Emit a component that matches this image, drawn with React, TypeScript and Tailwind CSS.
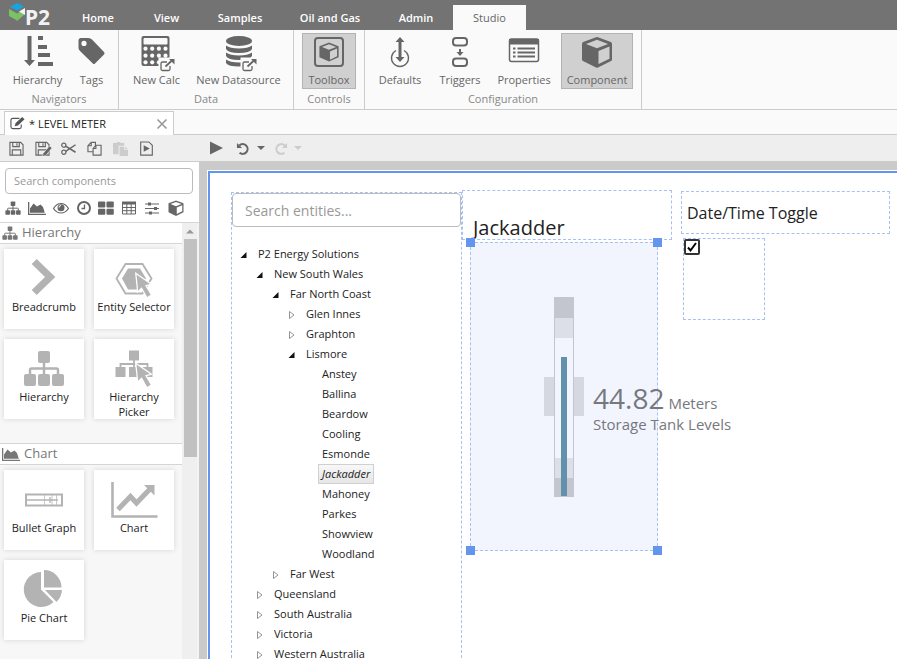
import type { ReactNode } from "react";

type IconProps = { className?: string };

/* ---------- shared drawings ---------- */

function Cube({ className = "size-9" }: IconProps) {
  return (
    <svg viewBox="0 0 36 36" className={className} fill="currentColor">
      <path
        fillRule="evenodd"
        d="M17 3.3q1-.5 2 0l12.800 4.800q1.200.500 1.200 1.800v15.500q0 1.200-1 1.700l-13 6.300q-1 .5-2 0l-13-6.300q-1-.5-1-1.700V9.900q0-1.300 1.200-1.800zM18 5.800 7 10l11 4.300L29 10zM19.500 17v13l11-5.300V12.600z"
      />
    </svg>
  );
}

function Sitemap({ className = "size-4" }: IconProps) {
  return (
    <svg viewBox="0 0 42 42" className={className} fill="currentColor">
      <rect x="15" y="4" width="12" height="12" rx="2" />
      <rect x="1" y="27" width="12" height="12" rx="2" />
      <rect x="15" y="27" width="12" height="12" rx="2" />
      <rect x="29" y="27" width="12" height="12" rx="2" />
      <path d="M7 28v-5q0-1.500 1.500-1.500h25q1.500 0 1.500 1.500v5M21 15v13" fill="none" stroke="currentColor" strokeWidth="2.500" />
    </svg>
  );
}

function AreaChart({ className = "h-4 w-[18px]" }: IconProps) {
  return (
    <svg viewBox="0 0 18 16" className={className} fill="currentColor">
      <path d="M0 2h1.300v11.700H18V15H0z" />
      <path d="M2 12.700V8.500L5.500 3.500l3.500 3L12.500 4.500l2.500 2.500 1.800 5.700z" />
    </svg>
  );
}

function ExternalLink() {
  return (
    <g>
      <path d="M19.500 23.500H37V39H19.500z" className="fill-[#fafafa]" />
      <path d="M28 28h-4.500q-1.500 0-1.500 1.500v5.500q0 1.500 1.500 1.500h6q1.500 0 1.500-1.500v-3" fill="none" stroke="currentColor" strokeWidth="1.300" />
      <path d="M26.500 32.500l7-6.500" fill="none" stroke="currentColor" strokeWidth="1.800" />
      <path d="M30 25h5.500v5.500z" />
    </g>
  );
}

function Pointer() {
  return (
    <path
      d="M23.500 17.500l13.500 9.500-5 1.200 5.700 9.500-3.500 2.200-5.500-9.700-3.500 3.500z"
      stroke="white"
      strokeWidth="2.500"
      paintOrder="stroke"
    />
  );
}

function Svg({ box = 36, className = "size-9", children }: { box?: number; className?: string; children: ReactNode }) {
  return (
    <svg viewBox={`0 0 ${box} ${box}`} className={`${className} shrink-0 overflow-visible`} fill="currentColor">
      {children}
    </svg>
  );
}

/* ---------- ribbon ---------- */

const ribbon = [
  {
    name: "Navigators",
    items: [
      {
        label: "Hierarchy",
        width: "w-[59px]",
        icon: (
          <Svg>
            <path d="M7.500 2h4v24H15l-5.500 6L4 26h3.500zM18 2h5v4h-5zM18 11h9v4h-9zM18 19h12v4H18zM18 28h15v4H18z" />
          </Svg>
        ),
      },
      {
        label: "Tags",
        width: "w-[37px]",
        icon: (
          <Svg>
            <path
              fillRule="evenodd"
              d="M4.500 6.500Q4.500 4 7 4h7.500q2 0 3.500 1.500L30 18q1.200 1.200 0 2.400L21 29.600q-1 1-2.200 0L6 17q-1.500-1.500-1.500-3zM10 6.800a2.600 2.600 0 1 0 0 5.200 2.600 2.600 0 0 0 0-5.200z"
            />
          </Svg>
        ),
      },
    ],
  },
  {
    name: "Data",
    items: [
      {
        label: "New Calc",
        width: "w-[59px]",
        icon: (
          <Svg>
            <rect x="2.500" y="2" width="28" height="30" rx="2" />
            <rect x="4.500" y="4" width="24" height="6.500" rx="1" className="fill-[#fafafa]" />
            <g className="fill-[#fafafa]">
              {[14.7, 21.7, 28.3].map((y) =>
                [6.5, 13.2, 19.9, 26.5].map((x) => <circle key={`${x}-${y}`} cx={x} cy={y} r="2.100" />)
              )}
            </g>
            <ExternalLink />
          </Svg>
        ),
      },
      {
        label: "New Datasource",
        width: "w-[93px]",
        icon: (
          <Svg>
            <ellipse cx="18" cy="7" rx="13" ry="5" />
            <path d="M5 11.500q4 3 13 3t13-3v3.500q-2 4-13 4t-13-4zM5 18.500q4 3 13 3t13-3V22q-2 4-13 4T5 22zM5 25.500q4 3 13 3t13-3V29q-2 3.500-13 3.500T5 29z" />
            <ExternalLink />
          </Svg>
        ),
      },
    ],
  },
  {
    name: "Controls",
    items: [
      {
        label: "Toolbox",
        width: "w-[54px]",
        active: true,
        icon: (
          <Svg>
            <rect x="4" y="4" width="28" height="28" rx="3" fill="none" stroke="currentColor" strokeWidth="2" />
            <g transform="translate(6.500 6.500) scale(.64)">
              <path
                fillRule="evenodd"
                d="M18 3l15 6v17l-15 7-15-7V9zM18 5.800 7 10l11 4.300L29 10zM19.500 17v13l11-5.300V12.600z"
              />
            </g>
          </Svg>
        ),
      },
    ],
  },
  {
    name: "Configuration",
    items: [
      {
        label: "Defaults",
        width: "w-[54px]",
        icon: (
          <Svg>
            <path d="M18 3l4.500 5h-3v15h3L18 28l-4.500-5h3V8h-3z" />
            <path d="M14 16.500a8.500 8.500 0 1 0 8 0" fill="none" stroke="currentColor" strokeWidth="1.400" />
          </Svg>
        ),
      },
      {
        label: "Triggers",
        width: "w-[54px]",
        icon: (
          <Svg>
            <rect x="11" y="4" width="14" height="7.500" rx="3" fill="none" stroke="currentColor" strokeWidth="2" />
            <rect x="11" y="24.500" width="14" height="7.500" rx="3" fill="none" stroke="currentColor" strokeWidth="2" />
            <path d="M17 15h2v3h2.500L18 22l-3.500-4H17z" />
          </Svg>
        ),
      },
      {
        label: "Properties",
        width: "w-[62px]",
        icon: (
          <Svg>
            <rect x="3.500" y="5" width="29" height="22.500" rx="2" fill="none" stroke="currentColor" strokeWidth="1.500" />
            <path d="M3 5h30v5.500H3zM7 13.500h2.500v2H7zM7 17.500h2.500v2H7zM7 21.500h2.500v2H7zM11.500 13.500H29v2H11.500zM11.500 17.500H29v2H11.500zM11.500 21.500H29v2H11.500z" />
          </Svg>
        ),
      },
      { label: "Component", width: "w-[72px]", active: true, icon: <Cube className="size-9 shrink-0" /> },
    ],
  },
];

const menu = [
  { label: "Home", width: "w-[72px]" },
  { label: "View", width: "w-[65px]" },
  { label: "Samples", width: "w-[82px]" },
  { label: "Oil and Gas", width: "w-[98px]" },
  { label: "Admin", width: "w-[74px]" },
];

function Header() {
  return (
    <header className="flex h-[30px] shrink-0 items-end bg-[#737373] text-[11px] font-semibold text-white">
      <div className="w-[62px] self-stretch">
        <svg viewBox="0 0 62 30" className="h-full w-full" role="img" aria-label="P2">
          <path d="M17 3l7 3.500-6.500 4L10 7z" fill="#14a5e3" />
          <path d="M9 9l8 4.500 1 7.500-9-5z" fill="#7bc265" />
          <path d="M17 13.500l7-4v5.500l-6.500 5.500z" fill="#7bc265" />
          <path d="M25 8v7l-6-3.500z" fill="#f2f2f2" />
          <text x="25" y="25" fontSize="21" fontWeight="700" fill="#f2f2f2" fontFamily="'Noto Sans', sans-serif">
            P2
          </text>
        </svg>
      </div>
      <nav className="flex">
        {menu.map((m) => (
          <a key={m.label} href="#" className={`${m.width} text-center leading-[25px]`}>
            {m.label}
          </a>
        ))}
        <a href="#" className="w-[73px] bg-[#fafafa] text-center leading-[25px] font-normal text-[#666]">
          Studio
        </a>
      </nav>
    </header>
  );
}

function Ribbon() {
  return (
    <div className="flex shrink-0 border-b border-[#ccc] bg-[#fafafa]">
      {ribbon.map((group) => (
        <section key={group.name} className="border-r border-[#ccc] px-2 pt-[3px]">
          <div className="flex gap-1.5">
            {group.items.map((item) => (
              <button
                key={item.label}
                className={`${item.width} flex h-14 flex-col items-center border text-[11px] leading-5 whitespace-nowrap text-[#666] ${
                  item.active ? "border-[#b3b3b3] bg-[#d0d0d0]" : "border-transparent"
                }`}
              >
                {item.icon}
                {item.label}
              </button>
            ))}
          </div>
          <h2 className="text-center text-[11px] leading-5 text-[#888]">{group.name}</h2>
        </section>
      ))}
    </div>
  );
}

/* ---------- document tab and toolbar ---------- */

const SAVE = "M1 1.500h11.500L15 4v11H1zM4 1.500v4.500h7V1.500M8.500 2.500v2.500M3.500 15V9.500h9V15";

function DocumentTabs() {
  return (
    <div className="flex h-[25px] shrink-0 border-b border-[#ccc] bg-[#fafafa] pt-px pl-1">
      <div className="-mb-px flex w-[170px] items-center border border-b-0 border-[#ccc] bg-white px-[5px] text-[11px] text-[#222]">
        <Svg box={16} className="size-[15px] text-[#555]">
          <path d="M10 2.500H3Q1 2.500 1 4.500v7q0 2 2 2h7q2 0 2-2V9" fill="none" stroke="currentColor" strokeWidth="1.200" />
          <path d="M13 1l2.500 2.500L8.500 10 5 11l1-3.500z" />
        </Svg>
        <span className="ml-1 flex-1 leading-6">* LEVEL METER</span>
        <button aria-label="Close tab" className="text-[#999]">
          <svg viewBox="0 0 12 12" className="size-3" stroke="currentColor" strokeWidth="1.600">
            <path d="M1.500 1.500l9 9M10.500 1.500l-9 9" />
          </svg>
        </button>
      </div>
    </div>
  );
}

function Line({ d, width = 1.2 }: { d: string; width?: number }) {
  return <path d={d} fill="none" stroke="currentColor" strokeWidth={width} />;
}

function Caret() {
  return (
    <svg viewBox="0 0 8 4" className="h-1 w-2" fill="currentColor">
      <path d="M0 0h8L4 4z" />
    </svg>
  );
}

const tools = [
  { label: "Save", icon: <Line d={SAVE} /> },
  {
    label: "Save as",
    icon: (
      <>
        <Line d={SAVE} />
        <path d="M15.500 5.500l2.300 2-6.300 7.500-3 1 .6-3z" stroke="#eee" strokeWidth="1" paintOrder="stroke" />
      </>
    ),
  },
  {
    label: "Cut",
    icon: (
      <>
        <circle cx="3" cy="4.500" r="2.200" fill="none" stroke="currentColor" strokeWidth="1.300" />
        <circle cx="3" cy="12" r="2.200" fill="none" stroke="currentColor" strokeWidth="1.300" />
        <Line d="M5 5.500l10.500 6.500M5 11l10.500-7" width={1.6} />
      </>
    ),
  },
  {
    label: "Copy",
    icon: <Line d="M6 11.500H1V5l3.500-3.500H9V5M1 5h3.500V1.500M9.500 4.500H15v10.500H6.500V8zM6.500 8h3V4.500" />,
  },
  {
    label: "Paste",
    disabled: true,
    icon: (
      <>
        <path d="M0 2h4V1h4v1h4v3H6v9H0z" />
        <path d="M7 6h5v3.500h4V16H7zM13 6l3 2.800h-3z" />
      </>
    ),
  },
  {
    label: "Preview",
    icon: (
      <>
        <Line d="M1.800 1h8.700L14.200 4.500V15H1.800z" />
        <path d="M5 4.500L11.500 8 5 11.500z" />
      </>
    ),
  },
];

const UNDO = "M3.500 4.800a5.200 5.200 0 1 1 .3 7.700";

function Toolbar() {
  return (
    <div className="flex h-[27px] shrink-0 items-center border-b border-[#ccc] bg-[#eee] text-[#666]">
      <div className="flex w-[199px] shrink-0 gap-2.5 pl-[9px]">
        {tools.map((t) => (
          <button key={t.label} aria-label={t.label} disabled={t.disabled} className="w-4 disabled:text-[#ccc]">
            <Svg box={16} className="size-[15px]">
              {t.icon}
            </Svg>
          </button>
        ))}
      </div>
      <button aria-label="Run" className="ml-2.5">
        <Svg box={16} className="size-4">
          <path d="M1 1.500L14 8 1 14.500z" />
        </Svg>
      </button>
      <button aria-label="Undo" className="ml-[11px] flex items-center gap-1.5">
        <Svg box={16} className="size-[15px]">
          <Line d={UNDO} width={2.2} />
          <path d="M1 2v5.500h5.500z" />
        </Svg>
        <Caret />
      </button>
      <button aria-label="Redo" disabled className="ml-2 flex items-center gap-1.5 text-[#ccc]">
        <Svg box={16} className="size-[15px] -scale-x-100">
          <Line d={UNDO} width={2.2} />
          <path d="M1 2v5.500h5.500z" />
        </Svg>
        <Caret />
      </button>
    </div>
  );
}

/* ---------- component toolbox ---------- */

const categories = [
  { label: "Hierarchy", icon: <Sitemap /> },
  { label: "Chart", icon: <AreaChart /> },
  {
    label: "Display",
    icon: (
      <Svg box={16} className="size-4">
        <Line d="M.5 8.500Q3.500 3.500 8 3.500t7.500 5Q12.500 13 8 13T.5 8.500z" />
        <circle cx="8" cy="7.700" r="3.500" />
        <path d="M6 7.500Q6 5.500 8 5.500" fill="none" stroke="white" />
      </Svg>
    ),
  },
  {
    label: "Time",
    icon: (
      <Svg box={16} className="size-4">
        <circle cx="8" cy="8" r="6" fill="none" stroke="currentColor" strokeWidth="2" />
        <Line d="M8.500 4.500v4H5.500" width={1.3} />
      </Svg>
    ),
  },
  {
    label: "Layout",
    icon: (
      <Svg box={16} className="size-4">
        <rect x="0" y="1.500" width="7.300" height="6" rx="1" />
        <rect x="8.500" y="1.500" width="7.300" height="6" rx="1" />
        <rect x="0" y="8.700" width="7.300" height="6" rx="1" />
        <rect x="8.500" y="8.700" width="7.300" height="6" rx="1" />
      </Svg>
    ),
  },
  {
    label: "Table",
    icon: (
      <Svg box={16} className="size-4">
        <path d="M1 1.500h14v3H1z" />
        <Line d="M1.500 2v12h13V2M1 7.500h14M1 10.700h14M5.800 4v10M10.200 4v10" width={1} />
      </Svg>
    ),
  },
  {
    label: "Inputs",
    icon: (
      <Svg box={16} className="size-4">
        <Line d="M1 4h14M1 8.500h14M1 13h14" width={1.2} />
        <path d="M4 2.500h3v3H4zM10 7h3v3h-3zM5 11.500h3v3H5z" />
      </Svg>
    ),
  },
  { label: "Objects", icon: <Cube className="size-[18px]" /> },
];

const library = [
  {
    name: "Hierarchy",
    icon: <Sitemap />,
    items: [
      {
        label: "Breadcrumb",
        icon: <path d="M13.700 2l18.600 18-18.600 18-5-5L22 20 8.700 7z" />,
      },
      {
        label: "Entity Selector",
        icon: (
          <>
            <Line d="M3.500 21.500L12.500 7h17l9 14.500-9 15h-17z" width={1.8} />
            <path d="M9 21.500L15 11.500h12l6 10-6 11H15z" />
            <Pointer />
          </>
        ),
      },
      {
        label: "Hierarchy",
        icon: <Sitemap className="size-[42px]" />,
      },
      {
        label: "Hierarchy Picker",
        icon: (
          <>
            <path d="M16 3.500h10v10H16zM2.500 20h10v10h-10zM16 20h10v10H16zM29.500 20h10v10h-10z" />
            <Line d="M7.500 20v-3h27v3M21 13v7" width={1.8} />
            <Pointer />
          </>
        ),
      },
    ],
  },
  {
    name: "Chart",
    icon: <AreaChart />,
    items: [
      {
        label: "Bullet Graph",
        icon: (
          <>
            <Line d="M3 16.500h36v11H3z" width={2} />
            <Line d="M4 22h31" width={1.5} />
            <Line d="M21.500 17v10M29 17v10M33.500 17v10" width={0.7} />
            <Line d="M27 19v6" width={1.3} />
          </>
        ),
      },
      {
        label: "Chart",
        icon: (
          <>
            <Line d="M-.5 4v34.500h45" width={2.6} />
            <Line d="M5 31.500l12.500-13 6 6.500L37 11" width={5} />
            <path d="M31 7h10.500v10.500z" />
          </>
        ),
      },
      {
        label: "Pie Chart",
        icon: (
          <>
            <path d="M18 4v17.500l12.500 12.500A17.500 17.500 0 1 1 18 4z" />
            <path d="M21 2a17.500 17.500 0 0 1 17.500 17.500H21z" />
            <path d="M22 22h17q-.5 7-5.500 12z" />
          </>
        ),
      },
    ],
  },
];

function Toolbox() {
  return (
    <aside className="flex w-[199px] shrink-0 flex-col bg-white">
      <div className="px-[5px] pt-[5px] pr-1.5">
        <input
          type="text"
          aria-label="Search components"
          placeholder="Search components"
          className="h-[26px] w-full rounded-sm border border-[#bbb] px-2 text-[11px] placeholder:text-[#999]"
        />
        <div className="flex h-7 items-center justify-between pr-2 text-[#666]">
          {categories.map((c) => (
            <button key={c.label} aria-label={c.label}>
              {c.icon}
            </button>
          ))}
        </div>
      </div>
      <div className="flex min-h-0 flex-1 overflow-hidden">
        <div className="w-[182px] bg-[#f7f7f7]">
          {library.map((section) => (
            <section key={section.name} className="pb-6">
              <h3 className="flex h-[22px] items-center gap-1 border-y border-[#d5d5d5] bg-white pl-0.5 text-[13px] text-[#777]">
                {section.icon}
                {section.name}
              </h3>
              <div className="grid grid-cols-[80px_80px] gap-2.5 pt-[5px] pl-1">
                {section.items.map((item) => (
                  <button
                    key={item.label}
                    className="flex h-20 flex-col items-center bg-white pt-2 text-[11px] leading-[15px] text-[#222] shadow-[0_0_5px_#d4d4d4]"
                  >
                    <Svg box={42} className="size-[42px] text-[#b3b3b3]">
                      {item.icon}
                    </Svg>
                    {item.label}
                  </button>
                ))}
              </div>
            </section>
          ))}
        </div>
        <div className="flex w-[15px] flex-col items-center border-t border-[#d5d5d5] bg-[#efefef]">
          <svg viewBox="0 0 15 16" className="h-4 w-[15px]" fill="#999">
            <path d="M4 10.500h8l-4-4z" />
          </svg>
          <div className="h-1/2 w-[13px] self-end bg-[#c1c1c1]" />
        </div>
        <div className="flex-1 border-t border-[#d5d5d5] bg-[#f3f3f3]" />
      </div>
    </aside>
  );
}

/* ---------- design canvas ---------- */

const tree = [
  { label: "P2 Energy Solutions", indent: "pl-2", state: "open" },
  { label: "New South Wales", indent: "pl-6", state: "open" },
  { label: "Far North Coast", indent: "pl-10", state: "open" },
  { label: "Glen Innes", indent: "pl-14", state: "closed" },
  { label: "Graphton", indent: "pl-14", state: "closed" },
  { label: "Lismore", indent: "pl-14", state: "open" },
  { label: "Anstey", indent: "pl-[72px]" },
  { label: "Ballina", indent: "pl-[72px]" },
  { label: "Beardow", indent: "pl-[72px]" },
  { label: "Cooling", indent: "pl-[72px]" },
  { label: "Esmonde", indent: "pl-[72px]" },
  { label: "Jackadder", indent: "pl-[72px]", selected: true },
  { label: "Mahoney", indent: "pl-[72px]" },
  { label: "Parkes", indent: "pl-[72px]" },
  { label: "Showview", indent: "pl-[72px]" },
  { label: "Woodland", indent: "pl-[72px]" },
  { label: "Far West", indent: "pl-10", state: "closed" },
  { label: "Queensland", indent: "pl-6", state: "closed" },
  { label: "South Australia", indent: "pl-6", state: "closed" },
  { label: "Victoria", indent: "pl-6", state: "closed" },
  { label: "Western Australia", indent: "pl-6", state: "closed" },
];

function EntityTree() {
  return (
    <ul className="pt-[17px] text-[11px] leading-5 text-[#222]">
      {tree.map((node) => (
        <li key={node.label} className={`${node.indent} flex h-5 items-center`}>
          <svg viewBox="0 0 8 8" className="mt-0.5 mr-1.5 size-2 shrink-0">
            {node.state === "open" && <path d="M6.500 1v6H.5z" fill="#111" />}
            {node.state === "closed" && <path d="M1.500.5v7L6 4z" fill="white" stroke="#888" strokeWidth=".9" />}
          </svg>
          <span
            className={
              node.selected
                ? "border border-[#d0d0d0] bg-linear-to-b from-[#f8f8f8] to-[#e6e6e6] px-[3px] leading-[18px] italic"
                : "px-1"
            }
          >
            {node.label}
          </span>
        </li>
      ))}
    </ul>
  );
}

function LevelMeter() {
  return (
    <>
      <svg viewBox="0 0 40 200" className="absolute top-[54px] left-[73px] h-[200px] w-10">
        <path d="M0 80h10v39H0zM30 80h10v39H30z" fill="#d5d8e0" />
        <path d="M10 0h20v200H10z" fill="#c3c6cf" />
        <path d="M11 21h18v160H11z" fill="#dcdfe7" />
        <path d="M11 41h18v120H11z" fill="#f2f5fe" />
        <path d="M17 60h6v139h-6z" fill="#6391ab" />
      </svg>
      <div className="absolute top-[137px] left-[122px] whitespace-nowrap text-[#76787e]">
        <p className="flex items-baseline gap-1">
          <span className="text-[28px] leading-9">44.82</span>
          <span className="text-[15px] leading-4">Meters</span>
        </p>
        <p className="text-[15px] leading-4">Storage Tank Levels</p>
      </div>
    </>
  );
}

function Canvas() {
  return (
    <main className="flex min-w-0 flex-1 bg-[#cacaca] pt-2 pl-2">
      <div className="flex flex-1 border-t border-l border-white">
        <div className="relative flex-1 overflow-hidden border-t-2 border-l-2 border-[#6495ed] bg-white">
          <div className="absolute top-[19px] -bottom-1 left-[21px] w-[231px] border border-dashed border-[#a5c1f5]">
            <input
              type="text"
              aria-label="Search entities"
              placeholder="Search entities..."
              className="h-[34px] w-full rounded-sm border border-[#bbb] px-3 text-sm placeholder:text-[#999]"
            />
            <EntityTree />
          </div>

          <div className="absolute top-[17px] left-[252px] h-[50px] w-[210px] border border-dashed border-[#a5c1f5] px-2.5 pt-[23px]">
            <h1 className="text-xl leading-7 text-[#222]">Jackadder</h1>
          </div>

          <div className="absolute top-[69px] left-[260px] h-[309px] w-[188px] border border-dashed border-[#a5c1f5] bg-[#f2f5fe]">
            <LevelMeter />
            <i className="absolute -top-[5px] -left-[5px] size-[9px] bg-[#6495ed]" />
            <i className="absolute -top-[5px] -right-[5px] size-[9px] bg-[#6495ed]" />
            <i className="absolute -bottom-[5px] -left-[5px] size-[9px] bg-[#6495ed]" />
            <i className="absolute -right-[5px] -bottom-[5px] size-[9px] bg-[#6495ed]" />
          </div>

          <div className="absolute top-[18px] left-[471px] h-[43px] w-[209px] border border-dashed border-[#a5c1f5] px-[5px] pt-[11px]">
            <label htmlFor="toggle" className="block text-base leading-5 text-[#222]">
              Date/Time Toggle
            </label>
          </div>

          <div className="absolute top-[65px] left-[473px] size-[82px] border border-dashed border-[#a5c1f5]">
            <div className="grid size-4">
              <input
                id="toggle"
                type="checkbox"
                defaultChecked
                className="peer col-start-1 row-start-1 size-4 appearance-none rounded-xs border-2 border-[#333] bg-white"
              />
              <svg
                viewBox="0 0 16 16"
                className="pointer-events-none invisible col-start-1 row-start-1 size-4 peer-checked:visible"
                fill="none"
                stroke="#000"
                strokeWidth="2"
              >
                <path d="M4 8.500l2.500 3L12 4" />
              </svg>
            </div>
          </div>
        </div>
      </div>
    </main>
  );
}

export default function App() {
  return (
    <div className="flex h-screen flex-col overflow-hidden bg-white font-['Open_Sans','Noto_Sans',sans-serif]">
      <Header />
      <Ribbon />
      <DocumentTabs />
      <Toolbar />
      <div className="flex min-h-0 flex-1">
        <Toolbox />
        <Canvas />
      </div>
    </div>
  );
}
